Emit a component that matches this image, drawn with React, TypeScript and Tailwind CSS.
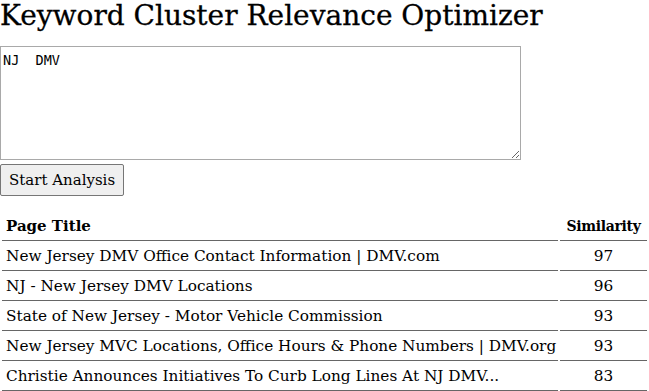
import React from "react";

const rows: [string, number][] = [
  ["New Jersey DMV Office Contact Information | DMV.com", 97],
  ["NJ - New Jersey DMV Locations", 96],
  ["State of New Jersey - Motor Vehicle Commission", 93],
  ["New Jersey MVC Locations, Office Hours & Phone Numbers | DMV.org", 93],
  ["Christie Announces Initiatives To Curb Long Lines At NJ DMV...", 83],
];

export default function App() {
  return (
    <div className="w-[649px] h-[391px] overflow-hidden bg-white text-black font-['DejaVu_Serif',serif]">
      <h1 className="text-[28px] leading-[32px] font-normal m-0 [-webkit-text-stroke:0.3px_black]">Keyword Cluster Relevance Optimizer</h1>
      <div className="mt-[14px] flex flex-col items-start">
        <textarea
          defaultValue={"NJ  DMV"}
          className="block w-[521px] h-[114px] border border-[#a9a9a9] px-[2px] pt-[5px] font-['DejaVu_Sans_Mono',monospace] text-[13.5px] leading-[16px] text-black resize-y outline-none"
        />
        <button className="mt-[4px] h-[32px] px-[8px] text-[15px] border border-[#767676] rounded-[2px] bg-[#efefef] text-black">
          Start Analysis
        </button>
      </div>
      <table className="mt-[15px] w-[649px] table-fixed border-separate border-spacing-[2px] text-[15.3px]">
        <colgroup>
          <col className="w-[556px]" />
          <col />
        </colgroup>
        <thead>
          <tr>
            <th className="text-left font-bold px-[4px] h-[28px] border-b border-[#666] text-[15px]">Page Title</th>
            <th className="text-center font-bold px-0 h-[28px] border-b border-[#666] text-[14px] tracking-[-0.3px] whitespace-nowrap">Similarity</th>
          </tr>
        </thead>
        <tbody>
          {rows.map(([t, s]) => (
            <tr key={t}>
              <td className="px-[4px] h-[28px] border-b border-[#666] whitespace-nowrap overflow-visible">{t}</td>
              <td className="px-[4px] h-[28px] border-b border-[#666] text-center">{s}</td>
            </tr>
          ))}
        </tbody>
      </table>
    </div>
  );
}
